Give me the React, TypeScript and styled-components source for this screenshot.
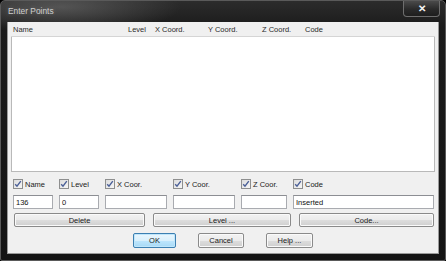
import styled, { createGlobalStyle } from "styled-components";

const GlobalStyle = createGlobalStyle`
  html, body {
    margin: 0;
    padding: 0;
    background: #000;
  }
  * {
    box-sizing: border-box;
  }
`;

const Window = styled.div`
  width: 446px;
  height: 261px;
  display: flex;
  flex-direction: column;
  padding: 0 6px 6px 6px;
  background:
    radial-gradient(ellipse 120px 26px at 60px 6px, rgba(120, 120, 120, 0.55), rgba(0, 0, 0, 0) 100%),
    linear-gradient(180deg, #2c2c2c 0%, #1b1b1b 10%, #141414 100%);
  border: 1px solid #5a5a5a;
  border-radius: 5px 5px 2px 2px;
  font-family: "Liberation Sans", Arial, sans-serif;
`;

const TitleBar = styled.div`
  height: 21px;
  flex-shrink: 0;
  display: flex;
  align-items: center;
  justify-content: space-between;
  padding-left: 1px;
`;

const Title = styled.span`
  font-size: 8.4px;
  color: #cfcfcf;
  text-shadow: 0 0 4px rgba(255, 255, 255, 0.25);
  margin-top: -1px;
`;

const CloseButton = styled.div`
  width: 37px;
  height: 16px;
  margin-top: -5px;
  margin-right: -1px;
  display: flex;
  align-items: center;
  justify-content: center;
  background: linear-gradient(180deg, #4a4a4a 0%, #2a2a2a 55%, #1e1e1e 100%);
  border: 1px solid #6e6e6e;
  border-top: none;
  border-radius: 0 0 4px 4px;
  color: #f4f4f4;
  font-size: 10px;
  font-weight: bold;
`;

const Client = styled.div`
  flex: 1;
  display: flex;
  flex-direction: column;
  background: #f0f0f0;
  padding: 0 3px 5px 3px;
  border: 1px solid #9a9a9a;
  border-top: none;
`;

const ListView = styled.div`
  height: 150px;
  flex-shrink: 0;
  display: flex;
  flex-direction: column;
`;

const ListHeader = styled.div`
  height: 15px;
  display: flex;
  align-items: center;
  border-bottom: 1px solid #d5d5d5;
`;

const HeaderCell = styled.div<{ $width?: number }>`
  width: ${(p) => (p.$width ? `${p.$width}px` : "auto")};
  flex: ${(p) => (p.$width ? "none" : "1")};
  padding-left: 2px;
  font-size: 7.5px;
  color: #2a2a2a;
  white-space: nowrap;
`;

const ListBody = styled.div`
  flex: 1;
  background: #fff;
  border: 1px solid #b9b9b9;
  border-top: none;
`;

const Controls = styled.div`
  display: flex;
  flex-direction: column;
  padding: 0 2px 0 2px;
`;

const FieldGrid = styled.div`
  display: grid;
  grid-template-columns: 40px 40px 62px 62px 46px 141px;
  column-gap: 6px;
  row-gap: 5px;
  margin-top: 6px;
`;

const CheckLabel = styled.label`
  height: 12px;
  display: flex;
  align-items: center;
  gap: 2px;
  font-size: 7.5px;
  color: #1a1a1a;
  white-space: nowrap;
`;

const CheckBox = styled.span`
  width: 10px;
  height: 10px;
  display: inline-flex;
  align-items: center;
  justify-content: center;
  background: linear-gradient(135deg, #dcdcdc 0%, #f6f6f6 100%);
  border: 1px solid #8e8f8f;
`;

const TextBox = styled.div`
  height: 14px;
  background: #fff;
  border: 1px solid #a9abb0;
  border-top-color: #8c8e93;
  font-size: 7.5px;
  color: #111;
  padding-left: 2px;
  display: flex;
  align-items: center;
`;

const ButtonRow = styled.div`
  display: grid;
  grid-template-columns: 131px 138px 135px;
  column-gap: 8px;
  margin-top: 4px;
  padding-left: 1px;
`;

const Button = styled.div<{ $default?: boolean }>`
  height: 14px;
  display: flex;
  align-items: center;
  justify-content: center;
  font-size: 7.5px;
  color: #1a1a1a;
  border-radius: 2px;
  border: 1px solid ${(p) => (p.$default ? "#3c7fb1" : "#8a8a8a")};
  background: ${(p) =>
    p.$default
      ? "linear-gradient(180deg, #eaf6fd 0%, #d9f0fc 50%, #bee6fd 51%, #a7d9f5 100%)"
      : "linear-gradient(180deg, #f2f2f2 0%, #ebebeb 50%, #dddddd 51%, #cfcfcf 100%)"};
  box-shadow: inset 0 0 0 1px ${(p) => (p.$default ? "#bfe6fb" : "#fafafa")};
`;

const DialogButtons = styled.div`
  display: flex;
  justify-content: center;
  gap: 22px;
  margin-top: 6px;
`;

const DialogButton = styled(Button)<{ $w: number }>`
  width: ${(p) => p.$w}px;
  height: 15px;
`;

const Check = () => (
  <CheckBox>
    <svg width="8" height="8" viewBox="0 0 8 8">
      <path d="M1.2 4.2 L3 6.2 L6.8 1.2" fill="none" stroke="#4a5f97" strokeWidth="1.4" />
    </svg>
  </CheckBox>
);

const columns = [
  { label: "Name", width: 115 },
  { label: "Level", width: 27 },
  { label: "X Coord.", width: 53 },
  { label: "Y Coord.", width: 54 },
  { label: "Z Coord.", width: 43 },
  { label: "Code" },
];

const fields = [
  { label: "Name", value: "136" },
  { label: "Level", value: "0" },
  { label: "X Coor.", value: "" },
  { label: "Y Coor.", value: "" },
  { label: "Z Coor.", value: "" },
  { label: "Code", value: "Inserted" },
];

export default function App() {
  return (
    <>
      <GlobalStyle />
      <Window>
        <TitleBar>
          <Title>Enter Points</Title>
          <CloseButton>✕</CloseButton>
        </TitleBar>
        <Client>
          <ListView>
            <ListHeader>
              {columns.map((c) => (
                <HeaderCell key={c.label} $width={c.width}>
                  {c.label}
                </HeaderCell>
              ))}
            </ListHeader>
            <ListBody />
          </ListView>
          <Controls>
            <FieldGrid>
              {fields.map((f) => (
                <CheckLabel key={f.label}>
                  <Check />
                  {f.label}
                </CheckLabel>
              ))}
              {fields.map((f) => (
                <TextBox key={f.label}>{f.value}</TextBox>
              ))}
            </FieldGrid>
            <ButtonRow>
              <Button>Delete</Button>
              <Button>Level ...</Button>
              <Button>Code...</Button>
            </ButtonRow>
            <DialogButtons>
              <DialogButton $w={43} $default>
                OK
              </DialogButton>
              <DialogButton $w={46}>Cancel</DialogButton>
              <DialogButton $w={47}>Help ...</DialogButton>
            </DialogButtons>
          </Controls>
        </Client>
      </Window>
    </>
  );
}
